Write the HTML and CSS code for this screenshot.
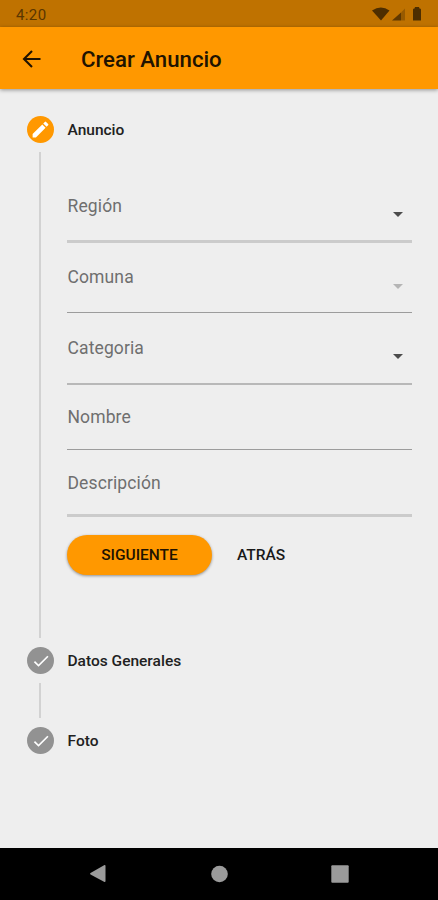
FILE: index.html
```html
<!DOCTYPE html>
<html lang="es">
<head>
<meta charset="utf-8">
<title>Crear Anuncio</title>
<link rel="stylesheet" href="styles.css">
</head>
<body>
<div class="status">
  <span class="clock">4:20</span>
  <svg class="status-icons" width="52" height="16" viewBox="0 0 52 16">
    <path d="M0 4.500Q9-1.500 17.500 4.500L9 14.500Z"/>
    <path d="M20 14.500L29 6.500V14.500Z" opacity=".85"/>
    <path d="M29 6.500L33 2.500V14.500H29Z" opacity=".35"/>
    <path d="M41 3.500Q41 2.500 42.500 2.500L43 1H47L47.500 2.500Q49 2.500 49 3.500V14.500H41Z"/>
  </svg>
</div>
<header class="appbar">
  <svg class="back" width="20" height="20" viewBox="0 0 20 20"><path d="M18.500 10H2.500M10 2L2 10L10 18"/></svg>
  <h1>Crear Anuncio</h1>
</header>
<main class="stepper">
  <section class="step step-open">
    <div class="rail">
      <span class="dot active"><svg width="21" height="21" viewBox="0 0 24 24"><path d="M3 17.250V21h3.750L17.810 9.940l-3.750-3.750L3 17.250zM20.710 7.040a1 1 0 0 0 0-1.410l-2.340-2.340a1 1 0 0 0-1.410 0l-1.830 1.830 3.750 3.750 1.830-1.830z"/></svg></span>
      <i class="line"></i>
    </div>
    <div class="body">
      <h2>Anuncio</h2>
      <form class="form">
        <div class="field select thick"><label>Región</label><i class="caret"></i></div>
        <div class="field select disabled"><label>Comuna</label><i class="caret"></i></div>
        <div class="field select medium"><label>Categoria</label><i class="caret"></i></div>
        <div class="field text"><label>Nombre</label></div>
        <div class="field text thick"><label>Descripción</label></div>
        <div class="actions">
          <button type="button" class="next">SIGUIENTE</button>
          <button type="button" class="prev">ATRÁS</button>
        </div>
      </form>
    </div>
  </section>
  <section class="step step-closed">
    <div class="rail">
      <span class="dot"><svg width="20" height="20" viewBox="0 0 24 24"><path d="M9 16.170L4.830 12l-1.420 1.410L9 19 21 7l-1.410-1.410z"/></svg></span>
      <i class="line"></i>
    </div>
    <div class="body"><h2>Datos Generales</h2></div>
  </section>
  <section class="step">
    <div class="rail">
      <span class="dot"><svg width="20" height="20" viewBox="0 0 24 24"><path d="M9 16.170L4.830 12l-1.420 1.410L9 19 21 7l-1.410-1.410z"/></svg></span>
    </div>
    <div class="body"><h2>Foto</h2></div>
  </section>
</main>
<nav class="navbar">
  <svg width="18" height="20" viewBox="0 0 18 20"><path d="M1.500 9L15.500 1Q16.500 .8 16.500 2V17Q16.500 18.500 15 17.800L1.500 10.500Q.5 9.800 1.500 9Z"/></svg>
  <svg width="18" height="20" viewBox="0 0 18 20"><circle cx="9.500" cy="10" r="8.300"/></svg>
  <svg width="18" height="20" viewBox="0 0 18 20"><rect x=".3" y="1.300" width="17.400" height="17.400" rx="1"/></svg>
</nav>
</body>
</html>
```
FILE: styles.css
```css
* { box-sizing: border-box; }
body {
  margin: 0;
  height: 900px;
  display: flex;
  flex-direction: column;
  overflow: hidden;
  background: #eee;
  color: #212121;
  font-family: Roboto, sans-serif;
}
h1, h2 { margin: 0; font-weight: 500; }

.status {
  height: 27px;
  flex: none;
  display: flex;
  justify-content: space-between;
  padding: 6px 14px 0 16px;
  background: #bf7200;
}
.clock { font-size: 15px; line-height: 18px; letter-spacing: .4px; color: #5a3600; }
.status-icons { fill: #4d2e00; }

.appbar {
  height: 62px;
  flex: none;
  display: flex;
  align-items: center;
  gap: 39px;
  padding: 1px 0 0 22px;
  background: #ff9800;
  box-shadow: 0 1px 4px rgba(0, 0, 0, .4);
}
.back { fill: none; stroke: #211300; stroke-width: 2.100; }
.appbar h1 { font-size: 22.200px; line-height: 30px; color: #211300; }

.stepper { flex: 1; padding: 27px 26px 0 27px; }
.step { display: flex; gap: 13px; }
.step-open { height: 531px; }
.step-closed { height: 80px; }
.rail { width: 27px; flex: none; display: flex; flex-direction: column; align-items: center; }
.dot {
  width: 27px;
  height: 27px;
  flex: none;
  display: grid;
  place-items: center;
  border-radius: 50%;
  background: #929292;
}
.dot.active { background: #ff9800; }
.dot svg { fill: #fff; }
.line { width: 2px; flex: 1; margin: 9px 1px 9px 0; background: #d2d2d2; }
.body { flex: 1; }
h2 { padding-left: .5px; font-size: 15.500px; line-height: 28px; }

.form { padding-top: 27px; }
.field {
  display: flex;
  justify-content: space-between;
  border-bottom: 1px solid #9c9c9c;
}
.field label { padding-left: .5px; font-size: 17.500px; line-height: 24px; color: #6f6f6f; letter-spacing: .12px; }
.select { height: 72px; padding-top: 23px; }
.select.disabled { height: 70px; padding-top: 22px; }
.text { height: 65px; padding-top: 20px; }
.text.thick { height: 67px; padding-top: 21px; }
.medium { border-bottom: 2px solid #b8b8b8; }
.thick { border-bottom: 3px solid #cbcbcb; }
.caret {
  margin: 18px 9px 0 0;
  height: 0;
  border: solid transparent;
  border-width: 5px 5.500px 0;
  border-top-color: #4c4c4c;
}
.disabled .caret { margin-top: 19px; border-top-color: #b5b5b5; }

.actions { display: flex; gap: 25px; margin-top: 18px; }
button {
  padding: 0;
  border: 0;
  background: none;
  color: #191919;
  font: 500 15.500px/40px Roboto, sans-serif;
}
.next {
  width: 145px;
  height: 40px;
  border-radius: 20px;
  background: #ff9800;
  color: #211300;
  box-shadow: 0 1px 3px rgba(0, 0, 0, .4);
}

.navbar {
  height: 52px;
  flex: none;
  display: flex;
  justify-content: space-between;
  align-items: center;
  padding: 0 89px;
  background: #000;
}
.navbar svg { fill: #9b9b9b; }
```
